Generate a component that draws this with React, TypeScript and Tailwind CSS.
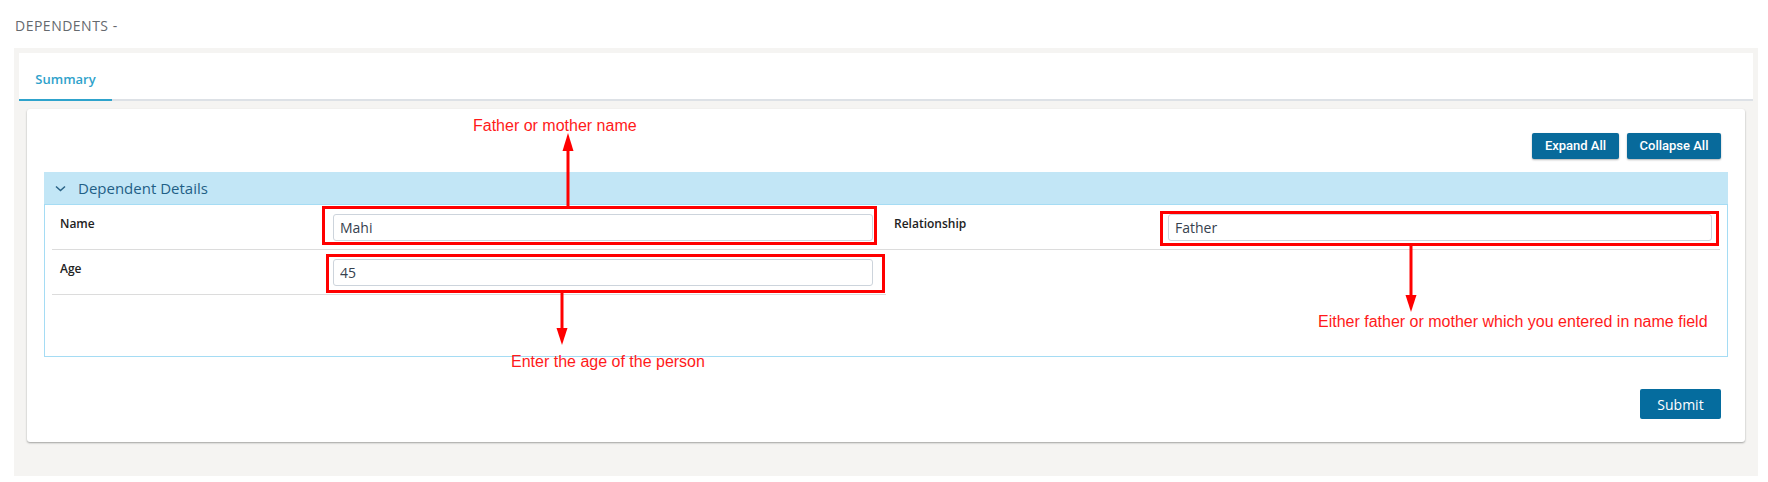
import React from "react";

const sans = { fontFamily: '"Open Sans", "Noto Sans", sans-serif' };
const arial = { fontFamily: '"Liberation Sans", Arial, sans-serif' };

function Field({ value }: { value: string }) {
  return (
    <input
      readOnly
      value={value}
      className="w-full h-[27px] border border-[#cdd4dc] rounded-[3px] px-[6px] text-[14px] text-[#36414e] bg-white outline-none"
      style={sans}
    />
  );
}

export default function App() {
  return (
    <div className="relative w-[1768px] h-[482px] bg-white overflow-hidden" style={sans}>
      {/* Title */}
      <div className="px-[15px] pt-[17px]">
        <div className="h-[18px] leading-[18px] text-[14px] tracking-[0.5px] text-[#65696e]">DEPENDENTS -</div>
      </div>

      {/* Gray container */}
      <div className="ml-[14px] mt-[13px] w-[1744px] bg-[#f5f4f2] p-[5px] pb-[34px]">
        {/* Tabs */}
        <div className="h-[48px] bg-white border-b-2 border-[#dde1e6] flex">
          <div className="w-[93px] h-[48px] -mb-[2px] border-b-2 border-[#2ea3cc] pt-[13px] text-center">
            <span className="text-[13px] leading-[18px] font-semibold text-[#2fa2cb]">Summary</span>
          </div>
        </div>

        {/* Card */}
        <div className="mt-[8px] mx-[8px] bg-white rounded-[3px] shadow-[0_1px_2px_rgba(0,0,0,0.35)] px-[17px] pt-[24px] pb-[23px]">
          {/* Buttons */}
          <div className="flex justify-end gap-[8px] pr-[7px] h-[26px]">
            <button
              className="w-[87px] h-[26px] bg-[#086a9b] text-white text-[13px] font-medium rounded-[2px] shadow-[0_1px_2px_rgba(0,0,0,0.3)]"
              style={{ fontFamily: 'Roboto, "Liberation Sans", sans-serif' }}
            >
              Expand All
            </button>
            <button
              className="w-[94px] h-[26px] bg-[#086a9b] text-white text-[13px] font-medium rounded-[2px] shadow-[0_1px_2px_rgba(0,0,0,0.3)]"
              style={{ fontFamily: 'Roboto, "Liberation Sans", sans-serif' }}
            >
              Collapse All
            </button>
          </div>

          {/* Accordion header */}
          <div className="mt-[13px] h-[32px] bg-[#c2e6f6] flex items-center pl-[11px]">
            <svg width="11" height="7" viewBox="0 0 11 7" className="shrink-0">
              <polyline points="1,1.5 5.5,5.5 10,1.5" fill="none" stroke="#2a6386" strokeWidth="1.5" />
            </svg>
            <span className="ml-[12px] text-[15px] leading-[32px] text-[#1f5f86]">Dependent Details</span>
          </div>

          {/* Accordion body */}
          <div className="h-[153px] border border-[#a5dcf4] px-[7px]">
            <div className="grid grid-cols-2">
              <div className="flex border-b border-[#dcdcdc] pt-[9px] pb-[8px]">
                <div className="w-[278px] shrink-0 pl-[8px] pt-[2px] text-[12px] leading-[16px] font-semibold text-[#222]">Name</div>
                <div className="flex-1 pl-[3px] pr-[13px]">
                  <Field value="Mahi" />
                </div>
              </div>
              <div className="flex border-b border-[#dcdcdc] pt-[9px] pb-[8px]">
                <div className="w-[278px] shrink-0 pl-[8px] pt-[2px] text-[12px] leading-[16px] font-semibold text-[#222]">Relationship</div>
                <div className="flex-1 pl-[4px] pr-[8px]">
                  <Field value="Father" />
                </div>
              </div>
              <div className="flex border-b border-[#dcdcdc] pt-[9px] pb-[8px]">
                <div className="w-[278px] shrink-0 pl-[8px] pt-[2px] text-[12px] leading-[16px] font-semibold text-[#222]">Age</div>
                <div className="flex-1 pl-[3px] pr-[13px]">
                  <Field value="45" />
                </div>
              </div>
              <div />
            </div>
          </div>

          {/* Submit */}
          <div className="mt-[32px] flex justify-end pr-[7px]">
            <button className="w-[81px] h-[30px] bg-[#056c9e] text-white text-[14px] rounded-[2px]" style={sans}>
              Submit
            </button>
          </div>
        </div>
      </div>

      {/* Annotations overlay */}
      <div className="absolute left-[322px] top-[206px] w-[555px] h-[39px] border-[3px] border-[#ff0000] pointer-events-none" />
      <div className="absolute left-[326px] top-[254px] w-[559px] h-[39px] border-[3px] border-[#ff0000] pointer-events-none" />
      <div className="absolute left-[1160px] top-[211px] w-[559px] h-[35px] border-[3px] border-[#ff0000] pointer-events-none" />

      <svg className="absolute left-0 top-0 pointer-events-none" width="1768" height="482">
        <line x1="568" y1="150" x2="568" y2="206" stroke="#ff0000" strokeWidth="3" />
        <polygon points="568,133 562.5,151 573.5,151" fill="#ff0000" />
        <line x1="562" y1="293" x2="562" y2="329" stroke="#ff0000" strokeWidth="3" />
        <polygon points="556.5,328 567.5,328 562,345" fill="#ff0000" />
        <line x1="1411" y1="246" x2="1411" y2="296" stroke="#ff0000" strokeWidth="3" />
        <polygon points="1405.5,295 1416.5,295 1411,312" fill="#ff0000" />
      </svg>

      <div className="absolute left-[473px] top-[118px] text-[16px] leading-[16px] text-[#ff1a1a] whitespace-nowrap" style={arial}>
        Father or mother name
      </div>
      <div className="absolute left-[511px] top-[354px] text-[16px] leading-[16px] text-[#ff1a1a] whitespace-nowrap" style={arial}>
        Enter the age of the person
      </div>
      <div className="absolute left-[1318px] top-[314px] text-[16px] leading-[16px] text-[#ff1a1a] whitespace-nowrap" style={arial}>
        Either father or mother which you entered in name field
      </div>
    </div>
  );
}
